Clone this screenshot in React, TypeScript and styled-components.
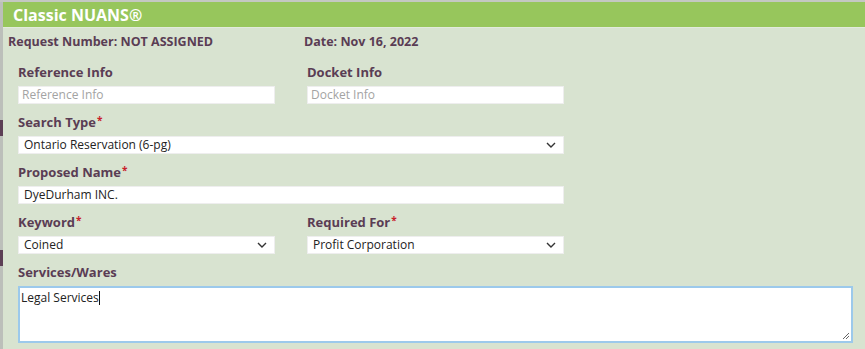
import styled, { createGlobalStyle } from "styled-components";

const GlobalStyle = createGlobalStyle`
  html, body {
    margin: 0;
    padding: 0;
    background: #d8e3d0;
  }
  body {
    font-family: "Open Sans", "DejaVu Sans", sans-serif;
  }
`;

const Page = styled.div`
  display: flex;
  width: 865px;
  height: 349px;
  overflow: hidden;
  border-top: 2px solid #c4c8c2;
  box-sizing: border-box;
`;

const Rail = styled.div`
  width: 3px;
  flex: none;
  background: #bcbfba;
  display: flex;
  flex-direction: column;
`;

const RailMark = styled.div<{ $top: number }>`
  margin-top: ${(p) => p.$top}px;
  height: 16px;
  background: #5c3f55;
`;

const Panel = styled.div`
  flex: 1;
  display: flex;
  flex-direction: column;
`;

const Header = styled.div`
  height: 25px;
  background: #97c65c;
  border-bottom: 1px solid #e2ebdc;
  display: flex;
  align-items: center;
  padding-left: 10px;
  color: #ffffff;
  font-weight: 700;
  font-size: 16px;
`;

const Body = styled.div`
  padding: 5px 0 0 5px;
  color: #5a3d54;
`;

const MetaRow = styled.div`
  display: flex;
  height: 16px;
  align-items: center;
  font-size: 12.5px;
  font-weight: 700;
  margin-bottom: 15px;
`;

const MetaItem = styled.div<{ $w?: number }>`
  width: ${(p) => (p.$w ? `${p.$w}px` : "auto")};
`;

const Form = styled.div`
  padding-left: 10px;
  display: flex;
  flex-direction: column;
  gap: 10px;
`;

const Row = styled.div`
  display: flex;
  gap: 32px;
`;

const Field = styled.div<{ $w: number }>`
  width: ${(p) => p.$w}px;
  display: flex;
  flex-direction: column;
  gap: 6px;
`;

const Label = styled.div`
  height: 16px;
  line-height: 16px;
  font-size: 13px;
  font-weight: 700;
  color: #5a3d54;
`;

const Req = styled.span`
  color: #c8202a;
  font-size: 10px;
  vertical-align: top;
  margin-left: 1px;
  line-height: 13px;
`;

const TextBox = styled.div<{ $placeholder?: boolean }>`
  height: 18px;
  box-sizing: border-box;
  background: #ffffff;
  border: 1px solid #eeeeee;
  font-size: 12px;
  line-height: 16px;
  padding: 0 3px 0 ${(p) => (p.$placeholder ? 3 : 5)}px;
  color: ${(p) => (p.$placeholder ? "#a3a3a3" : "#222222")};
  display: flex;
  align-items: center;
  justify-content: space-between;
`;

const Chevron = () => (
  <svg width="10" height="6" viewBox="0 0 10 6" style={{ marginRight: 4 }}>
    <path d="M1 1 L5 5 L9 1" fill="none" stroke="#333" strokeWidth="1.4" />
  </svg>
);

const Area = styled.div`
  width: 835px;
  height: 57px;
  box-sizing: border-box;
  background: #ffffff;
  border: 2px solid #9cc9eb;
  font-size: 12px;
  color: #222222;
  padding: 1px 1px;
  position: relative;
`;

const Caret = styled.span`
  display: inline-block;
  width: 1px;
  height: 14px;
  background: #111;
  vertical-align: -3px;
`;

const Grip = styled.svg`
  position: absolute;
  right: 1px;
  bottom: 1px;
`;

export default function App() {
  return (
    <>
      <GlobalStyle />
      <Page>
        <Rail>
          <RailMark $top={118} />
          <RailMark $top={114} />
        </Rail>
        <Panel>
          <Header>Classic NUANS®</Header>
          <Body>
            <MetaRow>
              <MetaItem $w={296}>Request Number: NOT ASSIGNED</MetaItem>
              <MetaItem>Date: Nov 16, 2022</MetaItem>
            </MetaRow>
            <Form>
              <Row>
                <Field $w={257}>
                  <Label>Reference Info</Label>
                  <TextBox $placeholder>Reference Info</TextBox>
                </Field>
                <Field $w={257}>
                  <Label>Docket Info</Label>
                  <TextBox $placeholder>Docket Info</TextBox>
                </Field>
              </Row>
              <Field $w={546}>
                <Label>
                  Search Type<Req>*</Req>
                </Label>
                <TextBox>
                  Ontario Reservation (6-pg)
                  <Chevron />
                </TextBox>
              </Field>
              <Field $w={546}>
                <Label>
                  Proposed Name<Req>*</Req>
                </Label>
                <TextBox>DyeDurham INC.</TextBox>
              </Field>
              <Row>
                <Field $w={257}>
                  <Label>
                    Keyword<Req>*</Req>
                  </Label>
                  <TextBox>
                    Coined
                    <Chevron />
                  </TextBox>
                </Field>
                <Field $w={257}>
                  <Label>
                    Required For<Req>*</Req>
                  </Label>
                  <TextBox>
                    Profit Corporation
                    <Chevron />
                  </TextBox>
                </Field>
              </Row>
              <Field $w={835}>
                <Label>Services/Wares</Label>
                <Area>
                  Legal Services<Caret />
                  <Grip width="8" height="8" viewBox="0 0 8 8">
                    <path d="M7 1 L1 7 M7 4 L4 7" stroke="#666" strokeWidth="1" />
                  </Grip>
                </Area>
              </Field>
            </Form>
          </Body>
        </Panel>
      </Page>
    </>
  );
}
